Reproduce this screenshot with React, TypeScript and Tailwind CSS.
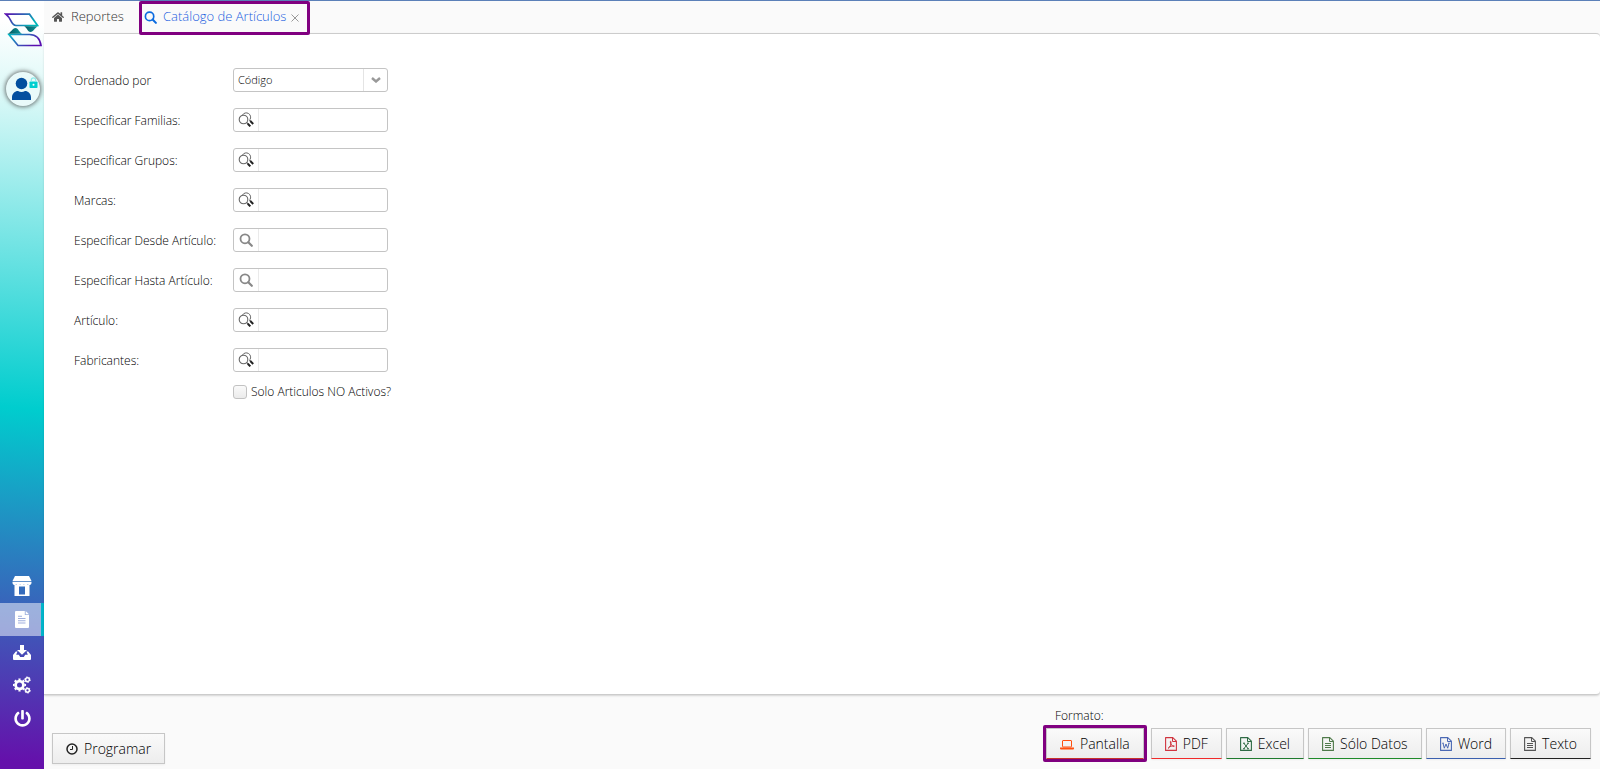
import React from "react";
import { FaHome, FaPowerOff } from "react-icons/fa";

type IconProps = { className?: string };

function LogoIcon({ className }: IconProps) {
  return (
    <svg viewBox="0 0 38 36" className={className} aria-hidden="true">
      <defs>
        <linearGradient id="logoTop" x1="0" y1="0" x2="1" y2="0.4">
          <stop offset="0" stopColor="#5a0fb0" />
          <stop offset="1" stopColor="#00b4b8" />
        </linearGradient>
        <linearGradient id="logoBottom" x1="0" y1="0" x2="1" y2="0.4">
          <stop offset="0" stopColor="#00b9c4" />
          <stop offset="1" stopColor="#5a0fb0" />
        </linearGradient>
        <linearGradient id="logoWedge" x1="0" y1="0" x2="1" y2="0">
          <stop offset="0" stopColor="#05555f" />
          <stop offset="1" stopColor="#0a9a9c" />
        </linearGradient>
      </defs>
      <path d="M2 2.200H25.500L33.500 13.500H12C6.500 13.500 8 6.500 2 2.200Z" fill="none" stroke="url(#logoTop)" strokeWidth="1.700" />
      <path d="M5 22.500H25.500C33 22.500 36 27 37 33.500H14Z" fill="none" stroke="url(#logoBottom)" strokeWidth="1.700" />
      <path d="M20 14.300H34c-3 1.200-4.500 5.700-7.500 5.700s-3.500-4.500-6.500-5.700Z" fill="url(#logoWedge)" />
      <path d="M4 21.700C7 20.500 8.500 16 11.500 16s3.500 4.500 6.500 5.700Z" fill="url(#logoWedge)" />
    </svg>
  );
}

function UserIcon({ className }: IconProps) {
  return (
    <svg viewBox="0 0 34 34" className={className} aria-hidden="true">
      <circle cx="15.500" cy="11.500" r="5.800" fill="#034f9f" />
      <path d="M6 28v-2.500c0-4 3-6.500 6-6.500 2 1.300 5 1.300 7 0 3 0 6 2.500 6 6.500V28Z" fill="#034f9f" />
      <rect x="23.500" y="9.500" width="8" height="6.500" rx="0.800" fill="#00cfd0" />
      <path d="M25.300 9.500V8a2.200 2.200 0 0 1 4.400 0v1.500" fill="none" stroke="#8feae8" strokeWidth="1.200" />
      <circle cx="27.500" cy="12.700" r="1" fill="#fff" />
    </svg>
  );
}

function StoreIcon({ className }: IconProps) {
  return (
    <svg viewBox="0 0 20 20" className={className} fill="currentColor" aria-hidden="true">
      <path d="M3 0h14l2.500 5H.5Z" />
      <path d="M.5 5.700h19v1.400a2 2 0 0 1-3.800.8 2 2 0 0 1-3.800 0 2 2 0 0 1-3.800 0 2 2 0 0 1-3.800 0A2 2 0 0 1 .5 7.100Z" />
      <path fillRule="evenodd" d="M2.500 8.500h15V20h-15ZM7 10.500v8h6v-8Z" />
    </svg>
  );
}

function ReportIcon({ className }: IconProps) {
  return (
    <svg viewBox="0 0 14 17" className={className} fill="currentColor" aria-hidden="true">
      <path fillRule="evenodd" d="M1 0h8.800v4H14v12a1 1 0 0 1-1 1H1a1 1 0 0 1-1-1V1a1 1 0 0 1 1-1Zm2 4.800v1h4v-1Zm0 2.200v1h7.500V7Zm0 2.200v1h7.500v-1Zm0 2.200v1h7.500v-1Z" />
      <path d="M10.700 0 14 3.200h-3.300Z" />
    </svg>
  );
}

function TrayIcon({ className }: IconProps) {
  return (
    <svg viewBox="0 0 18 15" className={className} fill="currentColor" aria-hidden="true">
      <path d="M7 0h4v5h3l-5 4.800L4 5h3Z" />
      <path d="M2.800 6.500h1.700L3.200 9.800h2.600L7.200 12h3.600l1.400-2.200h2.600l-1.300-3.300h1.700L18 10v4a1 1 0 0 1-1 1H1a1 1 0 0 1-1-1v-4Z" />
    </svg>
  );
}

function GearsIcon({ className }: IconProps) {
  return (
    <svg viewBox="0 0 18 18" className={className} fill="none" stroke="currentColor" aria-hidden="true">
      <circle cx="6.500" cy="9" r="3.900" strokeWidth="2.800" />
      <circle cx="6.500" cy="9" r="5.700" strokeWidth="1.800" pathLength="80" strokeDasharray="5 5" strokeDashoffset="2.500" />
      <circle cx="14.500" cy="3.700" r="1.900" strokeWidth="1.500" />
      <circle cx="14.500" cy="3.700" r="2.800" strokeWidth="1" pathLength="60" strokeDasharray="5 5" />
      <circle cx="14.500" cy="14.300" r="1.900" strokeWidth="1.500" />
      <circle cx="14.500" cy="14.300" r="2.800" strokeWidth="1" pathLength="60" strokeDasharray="5 5" />
    </svg>
  );
}

function ClockIcon({ className }: IconProps) {
  return (
    <svg viewBox="0 0 12 12" className={className} fill="none" stroke="currentColor" aria-hidden="true">
      <circle cx="6" cy="6" r="5" strokeWidth="1.500" />
      <path d="M6.500 3v3.500H4" strokeWidth="1" />
    </svg>
  );
}

function MultiSearchIcon({ className }: IconProps) {
  return (
    <svg viewBox="0 0 16 16" className={className} fill="none" aria-hidden="true">
      <path d="M4.500 3A4.300 4.300 0 1 1 12 7.500" stroke="#666" strokeWidth="1" />
      <circle cx="5.500" cy="7.500" r="4.300" stroke="#666" strokeWidth="1.100" fill="#fff" />
      <path d="m8.800 10.700 1.500 1.500M11.500 8l1 1" stroke="#555" strokeWidth="1.200" />
      <path d="m9.800 11.700 2.500 2.700M12.300 9l2.900 3" stroke="#222" strokeWidth="2" />
    </svg>
  );
}

function SearchIcon({ className }: IconProps) {
  return (
    <svg viewBox="0 0 14 14" className={className} fill="none" stroke="currentColor" aria-hidden="true">
      <circle cx="6" cy="5.800" r="4.500" strokeWidth="1.800" />
      <path d="m9.300 9.200 3.500 3.600" strokeWidth="2.200" strokeLinecap="round" />
    </svg>
  );
}

function LaptopIcon({ className }: IconProps) {
  return (
    <svg viewBox="0 0 14 14" className={className} aria-hidden="true">
      <rect x="2.500" y="3.500" width="9" height="6.500" rx="0.500" fill="none" stroke="currentColor" />
      <path d="M0 10.500h14v1a1 1 0 0 1-1 1H1a1 1 0 0 1-1-1Z" fill="currentColor" />
    </svg>
  );
}

const marks = {
  pdf: "M3 11.500c2-1 3.300-4 3-6.500 0-1-.8-1-.7 0C5.500 7.500 7 9 9.200 9.500M3.500 10.500C5 9.300 7 8.700 9.500 9",
  excel: "m3.800 6.200 4.400 5.600M8.200 6.200l-4.400 5.600M3 6.200h2M7 6.200h2M3 11.800h2M7 11.800h2",
  word: "M2.300 6.200h1.500M8.200 6.200h1.500M3 6.200l1.300 5L6 7l1.700 4.200 1.300-5",
  text: "M3 6.500h6M3 8.500h6M3 10.500h6",
};

function FileIcon({ mark, className }: { mark: keyof typeof marks; className?: string }) {
  return (
    <svg viewBox="0 0 12 14" className={className} fill="none" stroke="currentColor" aria-hidden="true">
      <path d="M.6.600h7.200l3.600 3.600v9.200H.6Z" strokeWidth="1.100" strokeLinejoin="round" />
      <path d="M7.500.800v3.700h3.700" strokeWidth="1" />
      <path d={marks[mark]} strokeWidth="1" />
    </svg>
  );
}

const navItems = [
  { label: "Tienda", active: false, icon: <StoreIcon className="h-5 w-5" /> },
  { label: "Reportes", active: true, icon: <ReportIcon className="h-[17px] w-[14px]" /> },
  { label: "Descargas", active: false, icon: <TrayIcon className="h-[15px] w-[18px]" /> },
  { label: "Configuración", active: false, icon: <GearsIcon className="h-[18px] w-[18px]" /> },
  { label: "Salir", active: false, icon: <FaPowerOff className="h-[17px] w-[17px]" /> },
];

const filters = [
  { id: "familias", label: "Especificar Familias:", multi: true },
  { id: "grupos", label: "Especificar Grupos:", multi: true },
  { id: "marcas", label: "Marcas:", multi: true },
  { id: "desde", label: "Especificar Desde Artículo:", multi: false },
  { id: "hasta", label: "Especificar Hasta Artículo:", multi: false },
  { id: "articulo", label: "Artículo:", multi: true },
  { id: "fabricantes", label: "Fabricantes:", multi: true },
];

const formats = [
  { label: "Pantalla", border: "border-b-[#c8322b]", highlighted: true, icon: <LaptopIcon className="h-[14px] w-[14px] text-[#ff4f0f]" /> },
  { label: "PDF", border: "border-b-[#f02a2a]", highlighted: false, icon: <FileIcon mark="pdf" className="h-[14px] w-3 text-[#d0343f]" /> },
  { label: "Excel", border: "border-b-[#1f7a2e]", highlighted: false, icon: <FileIcon mark="excel" className="h-[14px] w-3 text-[#2f6b45]" /> },
  { label: "Sólo Datos", border: "border-b-[#1f8a2a]", highlighted: false, icon: <FileIcon mark="text" className="h-[14px] w-3 text-[#4f7a4a]" /> },
  { label: "Word", border: "border-b-[#3a5fae]", highlighted: false, icon: <FileIcon mark="word" className="h-[14px] w-3 text-[#4a68b4]" /> },
  { label: "Texto", border: "border-b-[#222222]", highlighted: false, icon: <FileIcon mark="text" className="h-[14px] w-3 text-[#555555]" /> },
];

const labelClass = "w-[159px] pt-[2px]";

const buttonBase =
  "flex h-[31px] items-center whitespace-nowrap border border-[#c6c6c6] bg-linear-to-b from-[#fafafa] to-[#ededed] px-[13px] text-sm font-light text-black shadow-xs";

function Sidebar() {
  return (
    <aside className="flex w-11 shrink-0 flex-col items-center bg-[linear-gradient(184deg,#ffffff_3%,#d8f8f7_13%,#00cdce_53%,#6510ab_99%)]">
      <LogoIcon className="ml-px mt-[11px] h-9 w-[38px]" />
      <button type="button" aria-label="Usuario" className="ml-[2px] mt-6 h-[34px] w-[34px] rounded-full bg-[#e9fafa] shadow-[0_0_4px_1px_rgba(60,60,60,0.7)]">
        <UserIcon className="h-[34px] w-[34px]" />
      </button>
      <nav className="mb-[34px] mt-auto flex w-full flex-col">
        {navItems.map((item) => (
          <button
            key={item.label}
            type="button"
            aria-label={item.label}
            className={
              item.active
                ? "flex h-[33px] items-center justify-center border-r-3 border-[#00b5cb] bg-white/50 pb-px pl-[3px] text-white"
                : "flex h-[33px] items-center justify-center pb-px text-white"
            }
          >
            {item.icon}
          </button>
        ))}
      </nav>
    </aside>
  );
}

function Tabs() {
  return (
    <header className="flex h-8 shrink-0 text-[13px] font-light text-[#333333]">
      <a href="#reportes" className="flex w-[95px] items-center pl-2">
        <FaHome className="mr-[7px] h-3 w-3 text-[#555555]" />
        Reportes
      </a>
      <div className="relative z-10 flex h-[34px] items-center rounded-xs border-3 border-[#800080] pb-[2px] pl-[2px] pr-2">
        <a href="#catalogo" className="flex items-center text-[#1a5fe0]">
          <SearchIcon className="mr-[6px] h-[13px] w-[13px] text-[#0b6be0]" />
          Catálogo de Artículos
        </a>
        <button type="button" aria-label="Cerrar" className="ml-[5px] mt-[2px] text-[#999999]">
          <svg viewBox="0 0 8 8" className="h-2 w-2" fill="none" stroke="currentColor">
            <path d="m.5.500 7 7M7.500.500l-7 7" />
          </svg>
        </button>
      </div>
    </header>
  );
}

function FilterForm() {
  return (
    <form className="flex flex-col gap-4 pl-[30px] pt-[34px] text-xs font-light text-black">
      <div className="flex h-6 items-center">
        <label htmlFor="orden" className={labelClass}>Ordenado por</label>
        <div className="relative w-[155px]">
          <select id="orden" className="h-6 w-full appearance-none rounded-[3px] border border-[#c4c4c4] bg-white pl-1 text-[11px] outline-none">
            <option>Código</option>
          </select>
          <span className="pointer-events-none absolute inset-y-px right-px flex w-6 items-center justify-center border-l border-[#e4e4e4]">
            <svg viewBox="0 0 10 6" className="h-[6px] w-[10px]" fill="none" stroke="#999999" strokeWidth="2.400">
              <path d="m1 1 4 3.500L9 1" />
            </svg>
          </span>
        </div>
      </div>
      {filters.map((filter) => (
        <div key={filter.id} className="flex h-6 items-center">
          <label htmlFor={filter.id} className={labelClass}>{filter.label}</label>
          <div className="flex h-6 w-[155px] rounded-[3px] border border-[#c4c4c4] bg-white">
            <button type="button" aria-label={"Buscar " + filter.label} className="flex w-[25px] shrink-0 items-center justify-center border-r border-[#eaeaea] text-[#888888]">
              {filter.multi ? <MultiSearchIcon className="h-4 w-4" /> : <SearchIcon className="h-[14px] w-[14px]" />}
            </button>
            <input id={filter.id} type="text" className="w-0 grow bg-transparent px-1 outline-none" />
          </div>
        </div>
      ))}
      <label className="-mt-1 flex items-center gap-1 pl-[159px]">
        <input type="checkbox" className="h-[14px] w-[14px] appearance-none rounded-[3px] border border-[#c2c2c2] bg-linear-to-b from-[#fafafa] to-[#ebebeb] checked:bg-[#4a7fe0]" />
        Solo Articulos NO Activos?
      </label>
    </form>
  );
}

function Footer() {
  return (
    <footer className="flex shrink-0 items-end justify-between pb-[5px] pl-2 pr-[9px] pt-3">
      <button type="button" className={buttonBase}>
        <ClockIcon className="mr-[6px] h-3 w-3 text-[#222222]" />
        Programar
      </button>
      <div className="pb-[2px] text-black">
        <p className="mb-px pl-3 pt-px text-xs font-light">Formato:</p>
        <div className="flex items-center gap-1">
          {formats.map((format) => (
            <div key={format.label} className={format.highlighted ? "rounded-xs border-3 border-[#800080]" : "py-[3px]"}>
              <button type="button" className={buttonBase + " " + format.border}>
                <span className="mr-[6px]">{format.icon}</span>
                {format.label}
              </button>
            </div>
          ))}
        </div>
      </div>
    </footer>
  );
}

export default function App() {
  return (
    <div className="flex min-h-screen border-t border-[#5b80b8] bg-[#fafafa] font-['Open_Sans',sans-serif]">
      <Sidebar />
      <div className="flex min-w-0 grow flex-col">
        <Tabs />
        <main className="grow rounded-r-sm border border-x-0 border-[#cccccc] bg-white shadow-[0_1px_2px_rgba(0,0,0,0.15)]">
          <FilterForm />
        </main>
        <Footer />
      </div>
    </div>
  );
}
